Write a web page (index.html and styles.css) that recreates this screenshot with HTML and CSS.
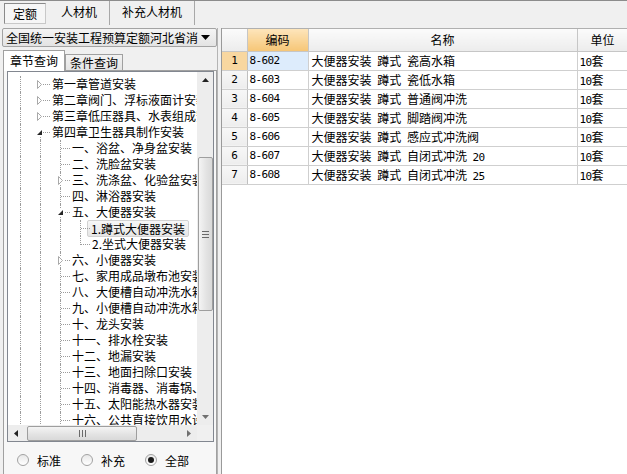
FILE: index.html
```html
<!DOCTYPE html>
<html lang="zh">
<head>
<meta charset="utf-8">
<title>定额</title>
<link rel="stylesheet" href="styles.css">
</head>
<body>
<div class="app">
  <div class="topbar">
    <div class="tab active">定额</div>
    <div class="tab">人材机</div>
    <div class="tab">补充人材机</div>
  </div>
  <div class="main">
    <div class="left">
      <div class="combo">
        <span class="combo-text">全国统一安装工程预算定额河北省消</span>
        <svg class="combo-arrow" width="9" height="5" viewBox="0 0 9 5"><path d="M0 0H9L4.5 5Z" fill="#000"/></svg>
      </div>
      <div class="subtabs">
        <div class="subtab active">章节查询</div>
        <div class="subtab">条件查询</div>
      </div>
      <div class="page">
        <div class="treebox">
          <div class="tree-top">
            <div class="tree-view">
              <div class="row"><i class="g"></i><i class="c h"><svg class="tri" width="7" height="9" viewBox="0 0 7 9"><path d="M1.5 0.5L5.5 4.5L1.5 8.5Z" fill="#fff" stroke="#a9a9a9"/></svg></i><span class="t">第一章管道安装</span></div>
              <div class="row"><i class="g"></i><i class="c h"><svg class="tri" width="7" height="9" viewBox="0 0 7 9"><path d="M1.5 0.5L5.5 4.5L1.5 8.5Z" fill="#fff" stroke="#a9a9a9"/></svg></i><span class="t">第二章阀门、浮标液面计安装</span></div>
              <div class="row"><i class="g"></i><i class="c h"><svg class="tri" width="7" height="9" viewBox="0 0 7 9"><path d="M1.5 0.5L5.5 4.5L1.5 8.5Z" fill="#fff" stroke="#a9a9a9"/></svg></i><span class="t">第三章低压器具、水表组成安装</span></div>
              <div class="row"><i class="g"></i><i class="c h down"><svg class="tri" width="7" height="7" viewBox="0 0 7 7"><path d="M6 1V6H1Z" fill="#262626"/></svg></i><span class="t">第四章卫生器具制作安装</span></div>
              <div class="row"><i class="g"></i><i class="g"></i><i class="c mid"></i><span class="t">一、浴盆、净身盆安装</span></div>
              <div class="row"><i class="g"></i><i class="g"></i><i class="c mid"></i><span class="t">二、洗脸盆安装</span></div>
              <div class="row"><i class="g"></i><i class="g"></i><i class="c mid"><svg class="tri" width="7" height="9" viewBox="0 0 7 9"><path d="M1.5 0.5L5.5 4.5L1.5 8.5Z" fill="#fff" stroke="#a9a9a9"/></svg></i><span class="t">三、洗涤盆、化验盆安装</span></div>
              <div class="row"><i class="g"></i><i class="g"></i><i class="c mid"></i><span class="t">四、淋浴器安装</span></div>
              <div class="row"><i class="g"></i><i class="g"></i><i class="c mid"><svg class="tri" width="7" height="7" viewBox="0 0 7 7"><path d="M6 1V6H1Z" fill="#262626"/></svg></i><span class="t">五、大便器安装</span></div>
              <div class="row"><i class="g"></i><i class="g"></i><i class="g"></i><i class="c mid"></i><span class="t sel">1.蹲式大便器安装</span></div>
              <div class="row"><i class="g"></i><i class="g"></i><i class="g"></i><i class="c last"></i><span class="t">2.坐式大便器安装</span></div>
              <div class="row"><i class="g"></i><i class="g"></i><i class="c mid"><svg class="tri" width="7" height="9" viewBox="0 0 7 9"><path d="M1.5 0.5L5.5 4.5L1.5 8.5Z" fill="#fff" stroke="#a9a9a9"/></svg></i><span class="t">六、小便器安装</span></div>
              <div class="row"><i class="g"></i><i class="g"></i><i class="c mid"></i><span class="t">七、家用成品墩布池安装</span></div>
              <div class="row"><i class="g"></i><i class="g"></i><i class="c mid"></i><span class="t">八、大便槽自动冲洗水箱安装</span></div>
              <div class="row"><i class="g"></i><i class="g"></i><i class="c mid"></i><span class="t">九、小便槽自动冲洗水箱安装</span></div>
              <div class="row"><i class="g"></i><i class="g"></i><i class="c mid"></i><span class="t">十、龙头安装</span></div>
              <div class="row"><i class="g"></i><i class="g"></i><i class="c mid"></i><span class="t">十一、排水栓安装</span></div>
              <div class="row"><i class="g"></i><i class="g"></i><i class="c mid"></i><span class="t">十二、地漏安装</span></div>
              <div class="row"><i class="g"></i><i class="g"></i><i class="c mid"></i><span class="t">十三、地面扫除口安装</span></div>
              <div class="row"><i class="g"></i><i class="g"></i><i class="c mid"></i><span class="t">十四、消毒器、消毒锅、饮水器安装</span></div>
              <div class="row"><i class="g"></i><i class="g"></i><i class="c mid"></i><span class="t">十五、太阳能热水器安装</span></div>
              <div class="row"><i class="g"></i><i class="g"></i><i class="c mid"></i><span class="t">十六、公共直接饮用水设备安装</span></div>
            </div>
            <div class="vscroll">
              <div class="sb-btn"><svg width="7" height="4" viewBox="0 0 7 4"><path d="M0 4L3.5 0L7 4Z" fill="#222"/></svg></div>
              <div class="vtrack">
                <div class="vthumb"><span class="vgrip"></span></div>
              </div>
              <div class="sb-btn"><svg width="7" height="4" viewBox="0 0 7 4"><path d="M0 0H7L3.5 4Z" fill="#707070"/></svg></div>
            </div>
          </div>
          <div class="hrow">
            <div class="hscroll">
              <div class="sb-btn"><svg width="4" height="7" viewBox="0 0 4 7"><path d="M4 0V7L0 3.5Z" fill="#222"/></svg></div>
              <div class="htrack">
                <div class="hthumb"><span class="hgrip"></span></div>
              </div>
              <div class="sb-btn"><svg width="4" height="7" viewBox="0 0 4 7"><path d="M0 0V7L4 3.5Z" fill="#707070"/></svg></div>
            </div>
            <div class="corner"></div>
          </div>
        </div>
        <div class="radios">
          <label class="radio"><span class="dot"></span>标准</label>
          <label class="radio"><span class="dot"></span>补充</label>
          <label class="radio"><span class="dot on"></span>全部</label>
        </div>
      </div>
    </div>
    <div class="splitter"></div>
    <div class="right">
      <table class="grid">
        <colgroup><col class="c-rh"><col class="c-code"><col class="c-name"><col class="c-unit"></colgroup>
        <thead>
          <tr><th></th><th class="hsel">编码</th><th>名称</th><th>单位</th></tr>
        </thead>
        <tbody>
          <tr><td class="rh rsel">1</td><td class="code csel">8-602</td><td class="name">大便器安装 蹲式 瓷高水箱</td><td class="unit"><span class="num">10</span>套</td></tr>
          <tr><td class="rh">2</td><td class="code">8-603</td><td class="name">大便器安装 蹲式 瓷低水箱</td><td class="unit"><span class="num">10</span>套</td></tr>
          <tr><td class="rh">3</td><td class="code">8-604</td><td class="name">大便器安装 蹲式 普通阀冲洗</td><td class="unit"><span class="num">10</span>套</td></tr>
          <tr><td class="rh">4</td><td class="code">8-605</td><td class="name">大便器安装 蹲式 脚踏阀冲洗</td><td class="unit"><span class="num">10</span>套</td></tr>
          <tr><td class="rh">5</td><td class="code">8-606</td><td class="name">大便器安装 蹲式 感应式冲洗阀</td><td class="unit"><span class="num">10</span>套</td></tr>
          <tr><td class="rh">6</td><td class="code">8-607</td><td class="name">大便器安装 蹲式 自闭式冲洗 <span class="num">20</span></td><td class="unit"><span class="num">10</span>套</td></tr>
          <tr><td class="rh">7</td><td class="code">8-608</td><td class="name">大便器安装 蹲式 自闭式冲洗 <span class="num">25</span></td><td class="unit"><span class="num">10</span>套</td></tr>
        </tbody>
      </table>
    </div>
  </div>
</div>
</body>
</html>
```
FILE: styles.css
```css
* { box-sizing: border-box; }
html, body { margin: 0; padding: 0; }
body {
  width: 627px;
  height: 474px;
  overflow: hidden;
  background: #f0f0f0;
  font-family: "Noto Sans CJK SC", "Liberation Sans", sans-serif;
  font-size: 12px;
  color: #000;
}
.app { width: 627px; height: 474px; display: flex; flex-direction: column; }

/* top tabs */
.topbar {
  height: 28px;
  display: flex;
  align-items: flex-start;
  padding-left: 4px;
  border-top: 1px solid #8c8c8c;
  flex: none;
}
.tab {
  height: 24px;
  line-height: 22px;
  padding: 0 12px;
  border-right: 1px solid #a8a8a8;
  white-space: nowrap;
}
.tab.active {
  height: 21px;
  line-height: 19px;
  margin-top: 2px;
  margin-right: 3px;
  padding: 0 8px;
  border: 1px solid #9a9a9a;
  border-color: #8a8a8a #c8c8c8 #c8c8c8 #8a8a8a;
  background: #f6f6f6;
}

.main { flex: 1; display: flex; min-height: 0; }

/* left pane */
.left {
  width: 217px;
  flex: none;
  display: flex;
  flex-direction: column;
}
.combo {
  margin-left: 2px;
  height: 19px;
  border: 1px solid #a3a3a3;
  border-radius: 2px;
  background: linear-gradient(#f4f4f4, #e3e3e3);
  display: flex;
  align-items: center;
  padding-left: 3px;
  padding-right: 6px;
  flex: none;
}
.combo-text { flex: 1; white-space: nowrap; overflow: hidden; line-height: 17px; }
.combo-arrow { flex: none; }

.subtabs {
  display: flex;
  align-items: flex-end;
  height: 21px;
  margin-top: 2px;
  padding-left: 3px;
  flex: none;
  position: relative;
  z-index: 1;
}
.subtab {
  height: 16px;
  line-height: 15px;
  padding: 0 4px;
  border: 1px solid #a0a0a0;
  border-bottom: none;
  background: linear-gradient(#f2f2f2, #e4e4e4);
  white-space: nowrap;
}
.subtab.active {
  height: 21px;
  line-height: 19px;
  padding: 0 6px;
  background: #fff;
  margin-bottom: -1px;
}

.page {
  flex: 1;
  margin-left: 3px;
  border: 1px solid #a0a0a0;
  border-bottom: none;
  background: #f7f7f7;
  padding: 0 2px 0 3px;
  display: flex;
  flex-direction: column;
}
.treebox {
  height: 371px;
  border: 1px solid #828790;
  background: #fff;
  display: flex;
  flex-direction: column;
  flex: none;
}
.tree-top { flex: 1; display: flex; min-height: 0; }
.tree-view {
  flex: 1;
  overflow: hidden;
  padding: 4px 0 0 2px;
}
.row {
  height: 16px;
  display: flex;
  align-items: center;
  white-space: nowrap;
}
.g, .c {
  width: 20px;
  height: 16px;
  flex: none;
  position: relative;
  display: flex;
  align-items: center;
  justify-content: center;
}
.g::before {
  content: "";
  position: absolute;
  left: 10px;
  top: 0;
  bottom: 0;
  border-left: 1px dotted #9c9c9c;
}
.c::after {
  content: "";
  position: absolute;
  left: 11px;
  right: 0;
  top: 8px;
  border-top: 1px dotted #9c9c9c;
}
.c.mid::before, .c.last::before, .c.down::before {
  content: "";
  position: absolute;
  left: 10px;
  border-left: 1px dotted #9c9c9c;
}
.c.mid::before { top: 0; bottom: 0; }
.c.last::before { top: 0; height: 9px; }
.c.down::before { top: 8px; bottom: 0; }
.tri { position: relative; z-index: 1; background: #fff; }
.c.h .tri { margin-left: -1px; }
.t {
  padding: 0 2px;
  height: 16px;
  line-height: 16px;
}
.t.sel {
  margin-left: -3px;
  padding: 0 3px;
  height: 17px;
  line-height: 15px;
  border: 1px solid #d2d2d2;
  border-radius: 2px;
  background: linear-gradient(#f7f7f7, #e6e6e6);
}

/* scrollbars */
.vscroll {
  width: 16px;
  flex: none;
  background: #ededed;
  display: flex;
  flex-direction: column;
}
.sb-btn {
  width: 16px;
  height: 16px;
  flex: none;
  display: flex;
  align-items: center;
  justify-content: center;
}
.vtrack { flex: 1; padding-top: 69px; }
.vthumb {
  margin-left: 1px;
  width: 15px;
  height: 154px;
  border: 1px solid #9e9e9e;
  border-radius: 2px;
  background: linear-gradient(90deg, #f4f4f4, #e2e2e2 60%, #d9d9d9);
  display: flex;
  align-items: center;
  justify-content: center;
}
.vgrip {
  width: 7px;
  height: 7px;
  background: repeating-linear-gradient(#6a6a6a 0 1px, transparent 1px 3px);
}
.hrow { height: 16px; display: flex; flex: none; }
.hscroll {
  flex: 1;
  background: #ededed;
  display: flex;
}
.htrack { flex: 1; padding-left: 3px; display: flex; align-items: center; }
.hthumb {
  width: 110px;
  height: 15px;
  border: 1px solid #9e9e9e;
  border-radius: 2px;
  background: linear-gradient(#f4f4f4, #e2e2e2 60%, #d9d9d9);
  display: flex;
  align-items: center;
  justify-content: center;
}
.hgrip {
  width: 7px;
  height: 7px;
  background: repeating-linear-gradient(90deg, #6a6a6a 0 1px, transparent 1px 3px);
}
.corner { width: 16px; flex: none; background: #f0f0f0; }

.radios {
  display: flex;
  align-items: center;
  height: 36px;
  padding-left: 10px;
  gap: 20px;
}
.radio {
  display: flex;
  align-items: center;
  gap: 8px;
  font-size: 12px;
}
.dot {
  width: 12px;
  height: 12px;
  border-radius: 50%;
  border: 1px solid #a2a2a2;
  background: linear-gradient(#e8e8e8, #ffffff);
  display: flex;
  align-items: center;
  justify-content: center;
}
.dot.on::after {
  content: "";
  width: 6px;
  height: 6px;
  border-radius: 50%;
  background: #1a1a1a;
}

/* splitter */
.splitter {
  width: 5px;
  flex: none;
  border-left: 1px solid #b4b4b4;
  border-right: 1px solid #9a9a9a;
  background: #f0f0f0;
}

/* right pane */
.right {
  flex: 1;
  overflow: hidden;
  background: #fff;
  border-top: 1px solid #b0b0b0;
}
.grid {
  table-layout: fixed;
  border-collapse: collapse;
  width: 425px;
}
.c-rh { width: 25px; }
.c-code { width: 61px; }
.c-name { width: 269px; }
.c-unit { width: 70px; }
.grid th {
  height: 22px;
  padding: 0;
  font-weight: normal;
  font-size: 12px;
  text-align: center;
  border-right: 1px solid #c6c6c6;
  border-bottom: 1px solid #c6c6c6;
  background: linear-gradient(#fbfbfb, #ececec);
}
.grid th:nth-child(4) { text-align: left; padding-left: 13px; }
.grid th.hsel { background: linear-gradient(#fde5bb, #f6c677); }
.grid tbody tr { height: 19px; }
.grid td {
  height: 19px;
  padding: 0 0 0 2px;
  border-right: 1px solid #cfcfcf;
  border-bottom: 1px solid #cfcfcf;
  white-space: nowrap;
  overflow: hidden;
  line-height: 15px;
}
.num, .grid td.code, .grid td.rh {
  font-family: "DejaVu Sans Mono", monospace;
  font-size: 11px;
  letter-spacing: -0.6px;
}
.num { line-height: 12px; vertical-align: baseline; }
.grid td.rh {
  text-align: center;
  padding: 0;
  background: linear-gradient(#f7f7f7, #ededed);
  border-right-color: #c0c0c0;
}
.grid td.rsel { background: #f8d7a0; }
.grid td.csel { background: #ddecfc; }
.grid td.name { word-spacing: 3px; padding-left: 3px; }
.grid td.name .num { word-spacing: 0; }
.grid td.unit { padding-left: 2px; }
```
